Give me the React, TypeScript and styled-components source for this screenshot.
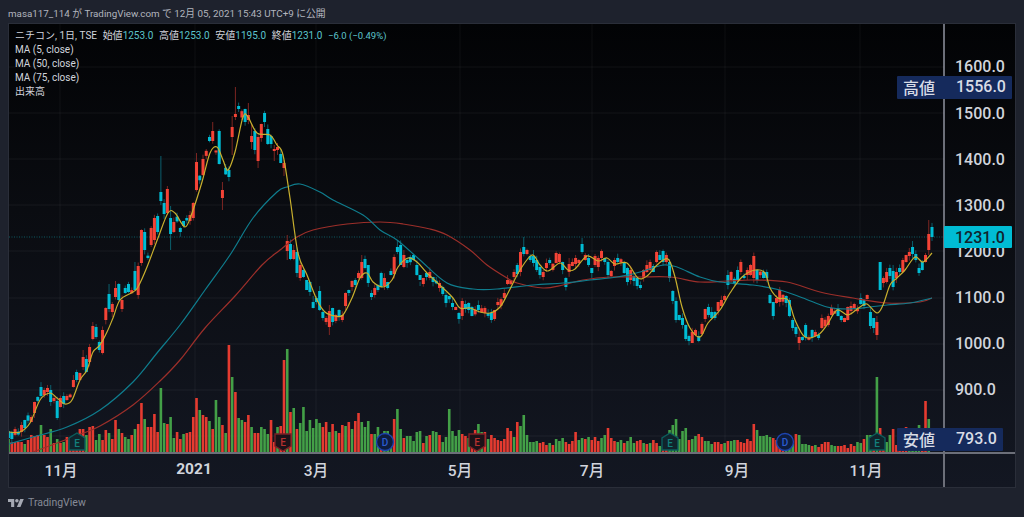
import styled, { createGlobalStyle } from "styled-components";

const FONT = `Roboto, "Noto Sans CJK JP", sans-serif`;

const GlobalStyle = createGlobalStyle`
  html, body {
    margin: 0;
    padding: 0;
    background: #1e222d;
    font-family: ${FONT};
  }
`;

type Pt = [number, number];

// all chart coordinates below are page pixels, the svg viewBox starts at the pane corner
const MA5: Pt[] = [
  [9,432],[20,432],[30,423],[40,400],[50,393],[57,398],[65,404],[72,400],[80,380],[87,370],[93,352],[100,345],
  [107,332],[113,318],[120,300],[133,292],[138,287],[147,267],[158,238],[168,213],[175,213],[185,227],[192,213],
  [202,182],[210,153],[217,147],[223,160],[228,170],[235,152],[243,117],[248,117],[257,133],[270,135],[277,145],
  [283,155],[290,198],[298,253],[307,275],[317,300],[325,312],[335,316],[343,315],[352,298],[360,278],[367,273],
  [373,282],[383,287],[392,280],[398,267],[408,258],[417,262],[427,273],[443,288],[453,298],[460,308],[470,308],
  [480,312],[490,313],[500,307],[508,293],[520,270],[532,255],[540,265],[548,271],[560,263],[568,270],[575,269],
  [587,256],[598,261],[607,258],[615,264],[627,263],[638,278],[647,276],[657,265],[668,259],[675,277],[682,307],
  [690,328],[700,337],[708,323],[720,310],[730,293],[742,277],[755,270],[765,273],[770,288],[778,298],[788,300],
  [795,320],[805,337],[818,335],[827,325],[837,310],[848,315],[860,307],[867,304],[877,313],[883,305],[890,285],
  [897,278],[905,270],[915,257],[923,262],[932,253],
];

const MA50: Pt[] = [
  [9,444],[33,437],[67,427],[100,410],[133,382],[157,353],[180,325],[205,290],[230,255],[253,218],[277,192],[287,187],
  [300,184],[320,192],[333,200],[363,215],[380,230],[397,240],[420,260],[447,283],[473,289],[497,289],[533,285],
  [563,283],[590,280],[617,277],[640,272],[663,265],[677,267],[700,277],[720,282],[753,285],[780,290],[803,298],
  [827,307],[847,309],[870,307],[887,305],[910,303],[932,298],
];

const MA75: Pt[] = [
  [33,452],[78,435],[100,426],[133,405],[160,381],[180,360],[205,328],[235,296],[262,265],[280,250],[297,237],[313,230],
  [347,224],[380,222],[403,224],[430,229],[447,235],[470,250],[487,265],[507,278],[517,283],[543,288],[563,285],
  [583,280],[610,277],[640,277],[670,277],[700,282],[727,281],[753,280],[787,282],[820,292],[853,298],[887,303],
  [920,302],[932,298],
];

// [x, bodyTop, bodyBottom, 1 = cyan / 0 = red, wickTop?, wickBottom?]
type Picked = [number, number, number, 0 | 1, number?, number?];
const PICKED: Picked[] = [
  [12,432,439,1],[21,425,432,0],[24,420,428,1],[31,417,422,0],[34,402,413,0],[41,387,396,1],[44,390,395,0],[47,388,392,0],
  [51,390,402,1,385],[54,398,401,0],[57,401,418,1],[60,398,407,0],[64,396,404,1],[67,396,400,0],[73,380,387,0],[77,372,380,1],
  [80,373,380,0],[83,357,367,0,350],[87,359,372,1],[90,347,362,0],[93,326,339,0,322],[96,327,337,1],[100,342,350,1],
  [103,330,353,0],[107,308,320,0],[109,294,309,1,284],[113,304,312,0],[116,288,297,0,281],[119,284,300,1],[123,300,309,0],
  [126,288,293,1],[130,284,292,1],[136,271,290,1,262],[139,266,295,0],[142,230,263,0],[146,232,250,1],[150,228,245,0],
  [155,218,240,0],[159,216,232,1],[162,192,201,1,156,205],[165,203,214,1],[168,189,213,0,186],[172,218,234,1,206,250],
  [175,222,232,0],[179,228,232,1],[182,218,235,0],[185,221,226,1],[189,215,221,0],[192,203,218,0],[195,190,206,1],
  [198,162,190,0,153],[202,159,182,1],[204,159,175,0],[208,138,159,0],[211,137,141,1],[214,131,141,0,122],[218,131,164,1],
  [221,163,189,1],[224,190,198,0,182,210],[228,170,177,1],[231,127,137,0,116,155],[234,102,118,1],[237,114,117,0,87,120],
  [240,106,109,1],[244,109,122,1],[247,115,120,0,103],[251,136,142,0,124,149],[254,131,150,1],[257,137,161,0,133,168],
  [260,124,138,0],[263,113,122,1],[267,129,144,1],[270,136,144,1],[274,149,151,0,145,161],[277,147,150,0],[280,154,163,1],
  [283,163,168,0,160,176],[286,241,251,0,235,260],[290,244,259,1],[293,250,259,0],[297,252,273,1],[300,265,278,0],
  [303,270,277,1],[306,280,290,1],[309,282,292,1],[313,302,308,1,296],[316,298,302,1],[319,291,310,1],[322,312,318,1],
  [326,318,322,0],[329,311,327,0,305,335],[333,308,322,1],[336,315,321,0],[339,310,317,1],[342,315,320,0],[346,293,306,0],
  [349,290,293,1],[352,281,287,0],[355,280,285,1],[359,273,278,0],[362,262,278,0,255],[365,259,268,1],[369,265,283,1],
  [372,293,297,1],[375,288,295,0],[382,273,287,1],[385,278,286,0],[388,282,288,1],[392,271,275,1],[395,257,274,0],
  [398,247,252,1,241],[401,245,265,1],[405,255,267,0],[408,260,263,1],[412,255,260,1],[418,265,275,1],[421,275,280,1,286],
  [424,278,284,0],[428,273,277,1],[431,272,278,0],[434,277,282,1],[438,291,300,1],[441,283,288,0],[444,287,294,1],
  [447,295,303,1],[451,303,307,1],[457,307,310,0],[460,313,319,1],[463,301,316,0],[467,304,309,1],[470,303,310,1],
  [473,307,316,1],[477,320,326,0,312,335],[480,305,310,1],[484,308,313,0],[490,313,320,1],[493,310,319,0],[499,302,305,0],
  [503,293,298,0],[506,284,297,0],[509,280,284,0],[513,272,277,0],[516,265,274,1],[519,252,272,0],[523,247,254,1,237],
  [526,250,254,0],[529,256,260,1],[533,256,263,1,250],[536,260,270,1],[539,267,275,1],[542,272,277,0],[545,272,279,0],
  [548,263,268,0],[551,260,263,1],[556,253,263,0],[559,254,262,0],[565,278,287,1],[562,262,270,1],[569,264,272,0,258],
  [572,262,266,0],[575,258,264,0],[578,260,263,0],[582,244,252,1,238],[585,255,260,0],[589,258,265,1],[592,268,273,1,278],
  [595,256,265,0],[598,258,267,0],[601,251,258,0],[604,258,262,1],[608,262,275,1],[611,271,276,0],[615,260,266,0],
  [619,258,262,1],[625,263,273,1],[628,268,282,1],[631,270,280,0],[634,276,281,1],[637,278,286,1],[640,285,288,1],
  [643,270,278,0],[647,265,272,0],[651,262,270,0],[654,266,272,1],[657,252,262,0],[660,255,260,1],[663,251,262,1],
  [666,255,262,0],[670,262,278,1],[673,291,301,1],[677,301,320,1],[680,315,320,1],[684,318,325,1],[687,325,339,1],
  [690,336,341,1],[693,332,343,0],[696,330,335,0],[700,336,341,1],[702,324,334,0],[706,309,319,0],[709,307,315,1],
  [713,312,318,1],[716,312,318,1],[719,302,311,0],[722,300,306,0],[725,296,300,0],[729,275,285,1],[732,272,280,0],
  [738,270,280,1],[742,262,272,0],[748,270,275,0],[752,265,275,0],[755,256,278,0],[758,270,280,1],[762,272,278,1],
  [766,272,278,1],[769,295,303,1],[772,302,316,1],[778,298,303,0],[781,290,302,0],[785,296,303,1],[788,300,316,1],
  [793,320,328,1],[795,327,334,1],[798,337,343,0,330,350],[803,337,340,1],[806,325,337,1],[811,330,337,1],[815,332,336,0],
  [818,335,338,1],[823,318,328,0],[827,316,325,0],[830,304,316,0],[833,308,315,0],[837,308,316,1],[840,316,320,1],
  [844,318,322,0],[847,307,320,0],[851,306,311,0],[855,304,308,0],[860,298,304,1],[864,300,306,1],[867,295,299,0],
  [870,312,326,1],[873,318,328,1],[877,322,335,0,316,340],[880,262,290,1,262,290],[883,278,283,0],[887,272,282,0],
  [890,268,276,1],[893,271,287,1,265],[897,272,278,0],[900,268,272,1],[903,260,272,0],[906,255,262,0],[909,252,256,0,248],
  [912,247,254,1,241],[915,254,260,1],[919,268,273,1],[922,262,270,1],[925,255,262,0],[929,234,250,0,220,255],[932,227,237,1],
];

// signed heights: positive green, negative red
const VOLUME = [
  13,-10,-10,-10,-10,8,-12,-17,-16,-17,27,-17,-15,23,-9,13,-9,10,-15,-12,-14,-12,-23,-23,17,-25,-26,12,18,-12,-22,19,-13,-32,
  23,-19,15,13,-17,23,-28,-49,33,-25,-25,-38,-20,64,29,-28,35,14,-20,-13,18,-19,-20,-35,-54,42,-37,-35,31,-23,52,35,-27,19,-107,
  75,-60,34,32,-30,-37,25,-19,-19,25,23,18,-32,-10,25,-26,-92,103,-40,44,-23,29,45,21,32,24,33,29,-25,-30,20,-28,21,-19,-27,26,
  -30,23,-31,-39,30,25,31,-18,18,25,-12,21,21,16,-33,43,23,-14,16,16,11,20,21,-9,16,-17,21,20,-17,10,15,43,21,16,22,-18,-16,14,
  -15,-22,28,20,-20,13,-17,-14,-12,-11,-13,-24,-21,15,-30,26,37,17,10,10,11,-9,-10,-7,9,-7,13,11,14,-10,-8,-11,-20,12,14,-13,15,
  -12,-15,-11,14,17,-24,-14,-11,10,12,-9,11,15,9,-11,-12,9,-8,9,-12,-9,6,-5,-5,22,27,33,13,21,24,-12,13,16,-18,-15,11,11,8,-10,
  -10,-8,9,-11,11,12,-12,-10,-9,-13,-11,-28,22,16,16,17,15,-14,-12,-6,-5,8,8,8,-18,17,8,8,7,-6,7,-5,-8,-10,-10,7,6,-6,-6,-7,-4,
  -8,-6,10,9,-13,17,17,-17,75,-24,-14,10,17,-23,-7,-5,-6,-25,7,6,6,27,-8,-51,33,
];

const BASE_Y = 452;
const BAR_X0 = 8.6;
const BAR_STEP = 3.24;
const BAR_COUNT = 286;
const barX = (i: number) => BAR_X0 + i * BAR_STEP;

const GRID_Y = [67, 113, 159, 205, 251, 298, 344, 390, 436];
const GRID_X = [60, 195, 316, 460, 592, 725, 860];

function smooth(points: Pt[]) {
  let d = `M${points[0][0]} ${points[0][1]}`;
  for (let i = 0; i < points.length - 1; i++) {
    const p0 = points[i - 1] || points[i];
    const p1 = points[i];
    const p2 = points[i + 1];
    const p3 = points[i + 2] || p2;
    const c1x = p1[0] + (p2[0] - p0[0]) / 6;
    const c1y = p1[1] + (p2[1] - p0[1]) / 6;
    const c2x = p2[0] - (p3[0] - p1[0]) / 6;
    const c2y = p2[1] - (p3[1] - p1[1]) / 6;
    d += `C${c1x.toFixed(1)} ${c1y.toFixed(1)} ${c2x.toFixed(1)} ${c2y.toFixed(1)} ${p2[0]} ${p2[1]}`;
  }
  return d;
}

function yAt(points: Pt[], x: number) {
  const next = points.findIndex((p) => p[0] >= x);
  if (next <= 0) return points[next === 0 ? 0 : points.length - 1][1];
  const [x0, y0] = points[next - 1];
  const [x1, y1] = points[next];
  return y0 + ((y1 - y0) * (x - x0)) / (x1 - x0);
}

function candles() {
  const out: { x: number; top: number; bottom: number; cyan: boolean; hi: number; lo: number }[] = [];
  let seed = 7;
  const rnd = () => {
    seed = (seed * 1664525 + 1013904223) % 4294967296;
    return seed / 4294967296;
  };
  PICKED.forEach(([x, top, bottom, cyan, hi, lo]) => {
    const i = Math.round((x - BAR_X0) / BAR_STEP);
    out[i] = {
      x: barX(i),
      top,
      bottom,
      cyan: cyan === 1,
      hi: hi ?? top - rnd() * 5,
      lo: lo ?? bottom + rnd() * 5,
    };
  });
  // bars not read off the picture sit on the average with a small body
  for (let i = 0; i < BAR_COUNT; i++) {
    if (out[i]) continue;
    const x = barX(i);
    const mid = yAt(MA5, x + 3) + (rnd() - 0.5) * 6;
    const h = 2 + rnd() * 5;
    out[i] = {
      x,
      top: mid - h / 2,
      bottom: mid + h / 2,
      cyan: rnd() > 0.5,
      hi: mid - h / 2 - rnd() * 4,
      lo: mid + h / 2 + rnd() * 4,
    };
  }
  return out;
}

const Page = styled.div`
  width: 1024px;
  height: 517px;
  display: flex;
  flex-direction: column;
  overflow: hidden;
  background: #1e222d;
`;

const Header = styled.div`
  height: 23px;
  box-sizing: border-box;
  padding: 2px 0 0 8px;
  display: flex;
  align-items: center;
  font-size: 9.8px;
  color: #b2b5be;
  white-space: nowrap;
`;

const Panel = styled.div`
  width: 1008px;
  height: 465px;
  margin-left: 8px;
  box-sizing: border-box;
  border: 1px solid #2a2e39;
  display: flex;
  flex-direction: column;
  background: linear-gradient(180deg, #020305 0%, #0a0c11 40%, #131722 100%);
`;

const ChartRow = styled.div`
  position: relative;
  height: 429px;
  display: flex;
`;

const Pane = styled.div`
  position: relative;
  width: 935px;
  height: 429px;
`;

const ChartSvg = styled.svg`
  display: block;
`;

const Legend = styled.div`
  position: absolute;
  left: 6px;
  top: 5px;
  display: flex;
  flex-direction: column;
  font-size: 10px;
  line-height: 14px;
  color: #d1d4dc;
  white-space: nowrap;
`;

const LegendRow = styled.div`
  display: flex;
  gap: 5.6px;
`;

const Quote = styled.span`
  color: #d1d4dc;
`;

const QuoteValue = styled.span`
  color: #5cc4cc;
`;

const Change = styled(QuoteValue)`
  font-size: 9.5px;
`;

const PriceAxis = styled.div`
  flex: 1;
  box-sizing: border-box;
  border-left: 2px solid #6c6f79;
  margin-left: -1px;
  padding: 19.9px 0 0 10px;
  display: flex;
  flex-direction: column;
`;

const PriceLabel = styled.div`
  height: 46.15px;
  display: flex;
  align-items: center;
  font-size: 16px;
  font-weight: 500;
  color: #d1d4dc;
`;

const Badge = styled.div<{ $top: number; $left: number; $width: number }>`
  position: absolute;
  top: ${(p) => p.$top}px;
  left: ${(p) => p.$left}px;
  width: ${(p) => p.$width}px;
  height: 23px;
  box-sizing: border-box;
  padding: 0 0 2px 6px;
  border-radius: 1px;
  background: #152a5c;
  display: flex;
  align-items: center;
  font-size: 16px;
  font-weight: 500;
  color: #d8dce6;
`;

const BadgeName = styled.span`
  width: 53px;
`;

const LastPrice = styled.div`
  position: absolute;
  top: 202px;
  left: 935px;
  width: 68px;
  height: 22px;
  box-sizing: border-box;
  padding-left: 11px;
  border-radius: 1px;
  background: #00bcd4;
  display: flex;
  align-items: center;
  font-size: 16px;
  font-weight: 500;
  color: #10232c;
`;

const TimeAxis = styled.div`
  flex: 1;
  box-sizing: border-box;
  border-top: 2px solid #6c6f79;
  margin-top: -1px;
  padding-bottom: 4px;
  display: grid;
  grid-template-columns: 104px 162px 82px 206px 58px 232px 26px;
  position: relative;
`;

const AxisGap = styled.div`
  position: absolute;
  left: 934px;
  top: 0;
  bottom: 0;
  width: 2px;
  background: #6c6f79;
`;

const TimeLabel = styled.div<{ $bold?: boolean }>`
  display: flex;
  align-items: center;
  justify-content: center;
  font-size: 15.5px;
  font-weight: ${(p) => (p.$bold ? 700 : 500)};
  color: #d1d4dc;
  white-space: nowrap;
`;

const Footer = styled.div`
  flex: 1;
  padding-left: 8px;
  display: flex;
  align-items: center;
  gap: 4px;
  font-size: 10.5px;
  color: #868b97;
`;

function House({ x, y }: { x: number; y: number }) {
  return (
    <g transform={`translate(${x} ${y})`}>
      <path d="M0 -9 L8 -4 V8 H-8 V-4 Z" fill="#10242c" stroke="#0b5d5c" strokeWidth="1.4" />
      <text x="0" y="4.6" textAnchor="middle" fontSize="10" fontWeight="500" fontFamily={FONT} fill="#12807c">E</text>
    </g>
  );
}

function Shield({ x, y }: { x: number; y: number }) {
  return (
    <g transform={`translate(${x} ${y})`}>
      <path d="M-8 -8 H8 V4 L0 9 L-8 4 Z" fill="#1c1218" stroke="#7a2026" strokeWidth="1.4" />
      <text x="0" y="3.6" textAnchor="middle" fontSize="10" fontWeight="500" fontFamily={FONT} fill="#b5302f">E</text>
    </g>
  );
}

function Dividend({ x, y }: { x: number; y: number }) {
  return (
    <g transform={`translate(${x} ${y})`}>
      <circle r="8.5" fill="#0e1c3e" stroke="#1d44b0" strokeWidth="1.4" />
      <text x="0" y="3.6" textAnchor="middle" fontSize="10" fontWeight="500" fontFamily={FONT} fill="#2a5bd0">D</text>
    </g>
  );
}

function Chart() {
  return (
    <ChartSvg width={935} height={429} viewBox="9 24 935 429">
      {GRID_Y.map((y) => (
        <line key={y} x1={9} x2={944} y1={y} y2={y} stroke="#ffffff" strokeOpacity={0.06} />
      ))}
      {GRID_X.map((x) => (
        <line key={x} x1={x} x2={x} y1={24} y2={453} stroke="#ffffff" strokeOpacity={0.05} />
      ))}
      {VOLUME.map((v, i) => (
        <rect key={i} x={barX(i) - 1.3} y={BASE_Y - Math.abs(v)} width={2.6} height={Math.abs(v)} fill={v > 0 ? "#43a047" : "#e53b30"} />
      ))}
      <line x1={9} x2={944} y1={237} y2={237} stroke="#0d5a62" strokeDasharray="1 1.5" />
      {candles().map((c, i) => (
        <g key={i}>
          <line x1={c.x} x2={c.x} y1={c.hi} y2={c.lo} stroke={c.cyan ? "#0b5f6d" : "#7d2622"} />
          <rect x={c.x - 1.5} y={c.top} width={3} height={c.bottom - c.top} fill={c.cyan ? "#00bcd4" : "#f44336"} />
        </g>
      ))}
      <path d={smooth(MA75)} fill="none" stroke="#9c2f2a" strokeWidth={1.2} />
      <path d={smooth(MA50)} fill="none" stroke="#0f7d8e" strokeWidth={1.2} />
      <path d={smooth(MA5)} fill="none" stroke="#c9b02e" strokeWidth={1.2} />
      <House x={77} y={442} />
      <Shield x={283} y={442} />
      <Dividend x={385} y={442} />
      <Shield x={477} y={442} />
      <House x={670} y={442} />
      <Dividend x={785} y={442} />
      <House x={877} y={442} />
    </ChartSvg>
  );
}

const PRICES = ["1600.0", "1500.0", "1400.0", "1300.0", "1200.0", "1100.0", "1000.0", "900.0"];
const QUOTES = [
  ["始値", "1253.0"],
  ["高値", "1253.0"],
  ["安値", "1195.0"],
  ["終値", "1231.0"],
];
const MONTHS = ["11月", "2021", "3月", "5月", "7月", "9月", "11月"];

export default function App() {
  return (
    <Page>
      <GlobalStyle />
      <Header>masa117_114 が TradingView.com で 12月 05, 2021 15:43 UTC+9 に公開</Header>
      <Panel>
        <ChartRow>
          <Pane>
            <Chart />
            <Legend>
              <LegendRow>
                <span>ニチコン, 1日, TSE</span>
                {QUOTES.map(([name, value]) => (
                  <Quote key={name}>
                    {name}
                    <QuoteValue>{value}</QuoteValue>
                  </Quote>
                ))}
                <Change>−6.0 (−0.49%)</Change>
              </LegendRow>
              <span>MA (5, close)</span>
              <span>MA (50, close)</span>
              <span>MA (75, close)</span>
              <span>出来高</span>
            </Legend>
          </Pane>
          <PriceAxis>
            {PRICES.map((p) => (
              <PriceLabel key={p}>{p}</PriceLabel>
            ))}
          </PriceAxis>
          <Badge $top={52} $left={888} $width={115}>
            <BadgeName>高値</BadgeName>1556.0
          </Badge>
          <LastPrice>1231.0</LastPrice>
          <Badge $top={404} $left={888} $width={106}>
            <BadgeName>安値</BadgeName>793.0
          </Badge>
        </ChartRow>
        <TimeAxis>
          {MONTHS.map((m, i) => (
            <TimeLabel key={i} $bold={m === "2021"}>
              {m}
            </TimeLabel>
          ))}
          <AxisGap />
        </TimeAxis>
      </Panel>
      <Footer>
        <svg width="16" height="8" viewBox="0 4 36 18">
          <path d="M14 22H7V11H0V4h14v18zM28 22h-8l7.5-18h8L28 22z" fill="#a5a9b3" />
          <circle cx="20" cy="8" r="4" fill="#a5a9b3" />
        </svg>
        TradingView
      </Footer>
    </Page>
  );
}
